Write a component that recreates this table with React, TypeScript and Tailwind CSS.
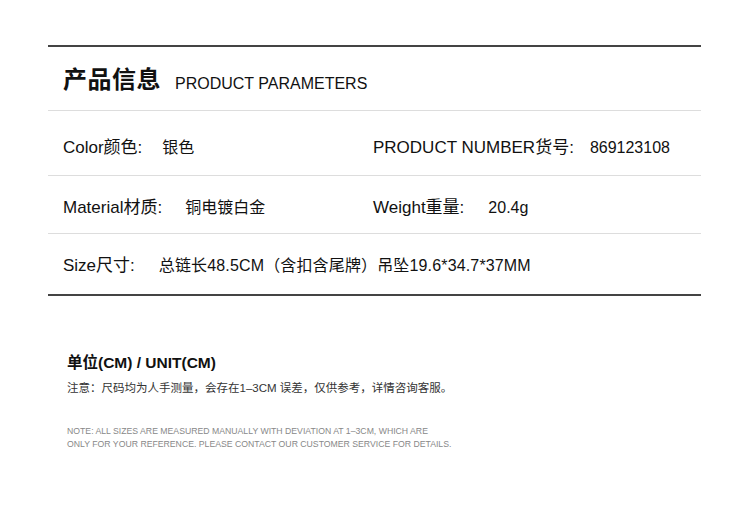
const font = { fontFamily: '"Liberation Sans", "Noto Sans CJK SC", sans-serif' };

type Cell = { label: string; value: string; gap: string };

function Field({ label, value, gap }: Cell) {
  return (
    <div className="flex items-center">
      <span className="text-[17px] text-[#111]">{label}</span>
      <span className={`text-[16px] text-[#111] ${gap}`}>{value}</span>
    </div>
  );
}

export default function App() {
  return (
    <main className="h-[514px] w-[750px] bg-white text-[#111]" style={font}>
      <div className="h-[45px]" />
      <section className="ml-[48px] w-[653px]">
        <div className="h-[2px] bg-[#444]" />

        <div className="flex h-[64px] items-center border-b border-[#ddd] pl-[15px] pt-[3px]">
          <h1 className="text-[24px] font-bold leading-none tracking-[0.5px]">产品信息</h1>
          <span className="ml-[14px] mt-[8px] text-[16px] leading-none">PRODUCT PARAMETERS</span>
        </div>

        <div className="flex h-[65px] items-center border-b border-[#ddd] pl-[15px] pt-[9px]">
          <div className="w-[310px]">
            <Field label="Color颜色:" value="银色" gap="ml-[20px]" />
          </div>
          <Field label="PRODUCT NUMBER货号:" value="869123108" gap="ml-[16px]" />
        </div>

        <div className="flex h-[58px] items-center border-b border-[#ddd] pl-[15px] pt-[7px]">
          <div className="w-[310px]">
            <Field label="Material材质:" value="铜电镀白金" gap="ml-[23px]" />
          </div>
          <Field label="Weight重量:" value="20.4g" gap="ml-[24px]" />
        </div>

        <div className="flex h-[60px] items-center pl-[15px] pt-[3px]">
          <span className="text-[17px]">Size尺寸:</span>
          <span className="ml-[24px] text-[16px] tracking-[0.15px]">总链长48.5CM（含扣含尾牌）吊坠19.6*34.7*37MM</span>
        </div>

        <div className="h-[2px] bg-[#444]" />
      </section>

      <section className="ml-[67px] mt-[58px]">
        <p className="text-[15.5px] font-bold leading-[18px]">单位(CM) / UNIT(CM)</p>
        <p className="mt-[9px] text-[11.5px] leading-[15px] text-[#333]">
          注意：尺码均为人手测量，会存在1–3CM 误差，仅供参考，详情咨询客服。
        </p>
        <div className="mt-[29px] text-[8.7px] leading-[13px] text-[#888]">
          <p>NOTE: ALL SIZES ARE MEASURED MANUALLY WITH DEVIATION AT 1–3CM, WHICH ARE</p>
          <p>ONLY FOR YOUR REFERENCE. PLEASE CONTACT OUR CUSTOMER SERVICE FOR DETAILS.</p>
        </div>
      </section>
    </main>
  );
}
